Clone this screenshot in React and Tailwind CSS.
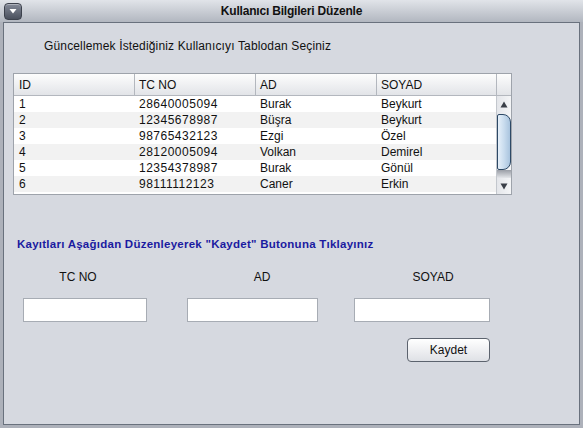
import React from "react";

const rows = [
  ["1", "28640005094", "Burak", "Beykurt"],
  ["2", "12345678987", "Büşra", "Beykurt"],
  ["3", "98765432123", "Ezgi", "Özel"],
  ["4", "28120005094", "Volkan", "Demirel"],
  ["5", "12354378987", "Burak", "Gönül"],
  ["6", "98111112123", "Caner", "Erkin"],
];

const font = { fontFamily: '"Liberation Sans", Arial, sans-serif' };

export default function App() {
  return (
    <div
      className="w-[583px] h-[428px] bg-[#adb1ba] flex flex-col text-[#111] overflow-hidden"
      style={font}
    >
      {/* Title bar */}
      <div className="h-[22px] shrink-0 bg-gradient-to-b from-[#e1e4e9] to-[#b2b7c0] grid grid-cols-[1fr_auto_1fr] items-center">
        <div className="pl-[4px] flex items-center">
          <div className="w-[18px] h-[17px] rounded-[4px] border border-[#3d424d] bg-gradient-to-b from-[#858b99] to-[#4a505d] flex items-center justify-center shadow-[inset_0_1px_0_rgba(255,255,255,0.35)]">
            <svg width="8" height="6" viewBox="0 0 8 6">
              <polygon points="0.5,1 7.5,1 4,5.5" fill="#ffffff" />
            </svg>
          </div>
        </div>
        <div className="text-[12px] font-bold leading-none tracking-[-0.2px]">Kullanıcı Bilgileri Düzenle</div>
        <div />
      </div>

      {/* Content panel */}
      <div className="flex-1 mx-[3px] mb-[3px] border border-[#69717d] bg-[#d6d9e0] flex flex-col">
        <div className="mt-[15px] ml-[40px] text-[12px] leading-[16px] tracking-[0.15px]">
          Güncellemek İstediğiniz Kullanıcıyı Tablodan Seçiniz
        </div>

        {/* Table */}
        <div className="mt-[19px] ml-[9px] w-[499px] border border-[#9ea3ab] bg-white text-[12px]">
          <div className="h-[22px] flex border-b border-[#b3b7be] bg-gradient-to-b from-[#fdfdfd] to-[#e2e4e8]">
            <div className="w-[121px] border-r border-[#b3b7be] pl-[5px] flex items-center">ID</div>
            <div className="w-[121px] border-r border-[#b3b7be] pl-[4px] flex items-center">TC NO</div>
            <div className="w-[121px] border-r border-[#b3b7be] pl-[4px] flex items-center">AD</div>
            <div className="w-[120px] border-r border-[#b3b7be] pl-[4px] flex items-center">SOYAD</div>
            <div className="flex-1" />
          </div>
          <div className="h-[98px] flex">
            <div className="w-[482px] flex flex-col">
              {rows.map((r, i) => (
                <div
                  key={i}
                  className={
                    "h-[16px] flex items-center leading-none " +
                    (i % 2 === 1 ? "bg-[#f2f2f2]" : "bg-white")
                  }
                >
                  <div className="w-[121px] pl-[5px]">{r[0]}</div>
                  <div className="w-[121px] pl-[4px] tracking-[0.5px]">{r[1]}</div>
                  <div className="w-[121px] pl-[4px]">{r[2]}</div>
                  <div className="w-[119px] pl-[4px]">{r[3]}</div>
                </div>
              ))}
            </div>
            {/* Scrollbar */}
            <div className="w-[15px] border-l border-[#c3c7cd] bg-gradient-to-r from-[#e4e6ea] to-[#f4f5f7] flex flex-col">
              <div className="h-[16px] flex items-center justify-center">
                <svg width="8" height="7" viewBox="0 0 8 7">
                  <polygon points="4,0.5 7.5,6.5 0.5,6.5" fill="#3a3f48" />
                </svg>
              </div>
              <div className="h-[56px] mt-[2px] rounded-r-[8px] rounded-l-[2px] border border-[#2d4966] bg-gradient-to-r from-[#e6f0f9] via-[#c9dcee] to-[#a9c4de]" />
              <div className="h-[8px] bg-gradient-to-b from-[#9a9ea6] to-[#e4e6ea]" />
              <div className="flex-1" />
              <div className="h-[16px] flex items-center justify-center">
                <svg width="8" height="7" viewBox="0 0 8 7">
                  <polygon points="0.5,0.5 7.5,0.5 4,6.5" fill="#3a3f48" />
                </svg>
              </div>
            </div>
          </div>
        </div>

        <div
          className="mt-[42px] ml-[13px] text-[11.5px] font-bold leading-[14px] tracking-[0.25px] text-[#1b1ba0]"
        >
          Kayıtları Aşağıdan Düzenleyerek "Kaydet" Butonuna Tıklayınız
        </div>

        <div className="mt-[19px] flex text-[12px] leading-[15px]">
          <div className="ml-[44px] w-[60px] text-center">TC NO</div>
          <div className="ml-[124px] w-[60px] text-center">AD</div>
          <div className="ml-[111px] w-[60px] text-center">SOYAD</div>
        </div>

        <div className="mt-[13px] flex">
          <div className="ml-[19px] w-[124px] h-[24px] bg-white border border-[#a7acb4]" />
          <div className="ml-[40px] w-[131px] h-[24px] bg-white border border-[#a7acb4]" />
          <div className="ml-[36px] w-[136px] h-[24px] bg-white border border-[#a7acb4]" />
        </div>

        <div className="mt-[16px] flex">
          <button className="ml-[403px] w-[83px] h-[24px] rounded-[4px] border border-[#5c636e] bg-gradient-to-b from-[#ffffff] to-[#dfe1e6] text-[12px] leading-none text-[#111] flex items-center justify-center">
            Kaydet
          </button>
        </div>
      </div>
    </div>
  );
}
